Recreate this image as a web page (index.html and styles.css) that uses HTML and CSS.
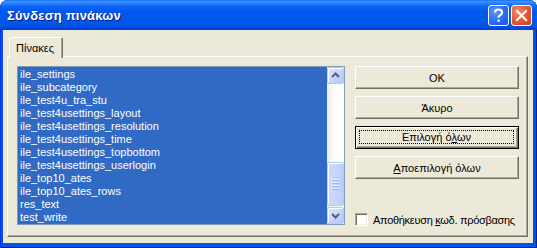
FILE: index.html
```html
<!DOCTYPE html>
<html>
<head>
<meta charset="utf-8">
<link rel="stylesheet" href="styles.css">
</head>
<body>
<div class="window">
  <div class="titlebar">
    <span class="title">Σύνδεση πινάκων</span>
    <div class="tbtns">
      <div class="tbtn help"><svg width="21" height="21" viewBox="0 0 21 21"><path d="M7 7.5 Q7 4.5 10.5 4.5 Q14 4.5 14 7.5 Q14 9.5 11.8 10.4 Q10.5 11 10.5 12.8" fill="none" stroke="#fff" stroke-width="2.2"/><rect x="9.4" y="14.5" width="2.3" height="2.3" fill="#fff"/></svg></div>
      <div class="tbtn close"><svg width="21" height="21" viewBox="0 0 21 21"><path d="M6 6 L15 15 M15 6 L6 15" stroke="#fff" stroke-width="2.2" stroke-linecap="square"/></svg></div>
    </div>
  </div>
  <div class="body">
    <div class="tabs"><div class="tab">Πίνακες</div></div>
    <div class="panel">
      <div class="list">
        <div class="items">
          <div class="item">ile_settings</div>
          <div class="item">ile_subcategory</div>
          <div class="item">ile_test4u_tra_stu</div>
          <div class="item">ile_test4usettings_layout</div>
          <div class="item">ile_test4usettings_resolution</div>
          <div class="item">ile_test4usettings_time</div>
          <div class="item">ile_test4usettings_topbottom</div>
          <div class="item">ile_test4usettings_userlogin</div>
          <div class="item">ile_top10_ates</div>
          <div class="item">ile_top10_ates_rows</div>
          <div class="item">res_text</div>
          <div class="item">test_write</div>
        </div>
        <div class="scroll">
          <div class="sbtn"><svg width="15" height="15" viewBox="0 0 15 15"><path d="M4 9 L7.5 5.5 L11 9" fill="none" stroke="#4D6185" stroke-width="2"/></svg></div>
          <div class="track">
            <div class="thumb"><span class="grip"></span><span class="grip"></span><span class="grip"></span><span class="grip"></span></div>
          </div>
          <div class="sbtn"><svg width="15" height="15" viewBox="0 0 15 15"><path d="M4 6 L7.5 9.5 L11 6" fill="none" stroke="#4D6185" stroke-width="2"/></svg></div>
        </div>
      </div>
      <div class="side">
        <div class="btn">OK</div>
        <div class="btn">Άκυρο</div>
        <div class="btn default"><span class="focus">Επιλογή ό<u>λ</u>ων</span></div>
        <div class="btn"><span><u>Α</u>ποεπιλογή όλων</span></div>
        <div class="spacer"></div>
        <label class="check"><span class="box"></span><span class="lbl">Αποθήκευση <u>κ</u>ωδ. πρόσβασης</span></label>
      </div>
    </div>
  </div>
</div>
</body>
</html>
```
FILE: styles.css
```css
html, body {
  margin: 0;
  padding: 0;
  width: 537px;
  height: 248px;
  overflow: hidden;
  background: #ffffff;
  font-family: "Liberation Sans", Arial, sans-serif;
  font-size: 11px;
}
.window {
  width: 537px;
  height: 248px;
  box-sizing: border-box;
  display: flex;
  flex-direction: column;
  background: #0055E5;
  border-radius: 8px 8px 0 0;
  box-shadow: inset 1px 0 0 #0831D9, inset -1px 0 0 #001EA0, inset 0 -1px 0 #001EA0;
}
.titlebar {
  height: 30px;
  flex: none;
  display: flex;
  align-items: center;
  justify-content: space-between;
  padding: 0 5px 0 7px;
  border-radius: 8px 8px 0 0;
  background: linear-gradient(to bottom, #0A5FEF 0, #3D95FF 1px, #2A86FF 3px, #0F66F4 6px, #0058EE 11px, #0057EB 22px, #0052E2 26px, #003DD7 30px);
}
.title {
  color: #ffffff;
  font-family: "Liberation Sans", Arial, sans-serif;
  font-weight: bold;
  font-size: 13px;
  letter-spacing: 0.2px;
  text-shadow: 1px 1px 0 #0A1883;
  margin-top: 1px;
}
.tbtns {
  display: flex;
  gap: 2px;
}
.tbtn {
  width: 21px;
  height: 21px;
  box-sizing: border-box;
  border: 1px solid #ffffff;
  border-radius: 3px;
  display: flex;
  align-items: center;
  justify-content: center;
  overflow: hidden;
}
.tbtn svg { flex: none; margin: -1px; }
.help {
  background: radial-gradient(circle at 30% 30%, #5C95FF 0, #2D6EF4 50%, #1A55E0 100%);
}
.close {
  background: radial-gradient(circle at 30% 30%, #F08B69 0, #E25A35 50%, #C8401C 100%);
}
.body {
  flex: 1;
  margin: 0 4px 5px 3px;
  background: #ECE9D8;
  display: flex;
  flex-direction: column;
  padding: 7px 5px 6px 4px;
}
.tabs {
  display: flex;
  padding-left: 2px;
  height: 19px;
}
.tab {
  box-sizing: border-box;
  padding: 4px 7px 0 6px;
  border-top: 1px solid #ffffff;
  border-left: 1px solid #ffffff;
  border-right: 1px solid #716F64;
  box-shadow: inset -1px 0 0 #ACA899;
  border-radius: 2px 2px 0 0;
  background: #ECE9D8;
  color: #000;
  position: relative;
  z-index: 1;
  height: 21px;
  width: 54px;
}
.panel {
  flex: 1;
  display: flex;
  gap: 10px;
  padding: 9px 7px 9px 9px;
  border-top: 1px solid #ffffff;
  border-left: 1px solid #ffffff;
  border-right: 1px solid #716F64;
  border-bottom: 1px solid #716F64;
  box-shadow: inset -1px -1px 0 #ACA899;
}
.list {
  width: 328px;
  height: 159px;
  box-sizing: border-box;
  border: 1px solid #7F9DB9;
  display: flex;
  background: #ffffff;
}
.items {
  flex: 1;
  background: #316AC5;
  color: #ffffff;
  padding-top: 1px;
}
.item {
  height: 13px;
  line-height: 13px;
  padding-left: 2px;
  white-space: nowrap;
}
.scroll {
  width: 17px;
  display: flex;
  flex-direction: column;
  background: linear-gradient(to right, #EEEDE5 0, #F6F5F0 3px, #FDFDFA 8px, #FEFEFB 100%);
}
.sbtn {
  height: 17px;
  box-sizing: border-box;
  border: 1px solid #B5C8F3;
  border-radius: 2px;
  background: linear-gradient(135deg, #E1EAFE 0, #C5D6FC 50%, #B4C9F8 100%);
  box-shadow: inset 1px 1px 0 #ffffff;
  display: flex;
  align-items: center;
  justify-content: center;
}
.track {
  flex: 1;
  display: flex;
  flex-direction: column;
  justify-content: flex-end;
  padding-bottom: 1px;
}
.thumb {
  height: 44px;
  box-sizing: border-box;
  border: 1px solid #B5C8F3;
  border-radius: 2px;
  background: linear-gradient(to right, #CAD9FC 0, #C7D7FC 50%, #BACEFA 100%);
  box-shadow: inset 1px 1px 0 #ffffff;
  display: flex;
  flex-direction: column;
  align-items: center;
  justify-content: center;
  gap: 1px;
}
.grip {
  width: 6px;
  height: 1px;
  background: #EEF4FE;
  border-bottom: 1px solid #8CB0F8;
}
.side {
  width: 164px;
  display: flex;
  flex-direction: column;
  gap: 7px;
}
.btn {
  height: 23px;
  flex: none;
  box-sizing: border-box;
  border-top: 1px solid #ffffff;
  border-left: 1px solid #ffffff;
  border-right: 1px solid #716F64;
  border-bottom: 1px solid #716F64;
  box-shadow: inset -1px -1px 0 #ACA899;
  display: flex;
  align-items: center;
  justify-content: center;
  color: #000;
  background: #ECE9D8;
}
.btn.default {
  border: 1px solid #000000;
  box-shadow: inset 1px 1px 0 #ffffff, inset -1px -1px 0 #716F64, inset -2px -2px 0 #ACA899;
  padding: 3px 4px 4px 3px;
}
.focus {
  flex: 1;
  align-self: stretch;
  display: flex;
  align-items: center;
  justify-content: center;
  outline: 1px dotted #000;
  outline-offset: -1px;
}
.spacer { flex: 1; }
.check {
  display: flex;
  align-items: center;
  gap: 5px;
  height: 13px;
  flex: none;
  margin-bottom: 1px;
  color: #000;
  white-space: nowrap;
}
.lbl {
  font-size: 11px;
  letter-spacing: -0.3px;
}
.box {
  width: 13px;
  height: 13px;
  flex: none;
  box-sizing: border-box;
  background: #ffffff;
  border-top: 1px solid #ACA899;
  border-left: 1px solid #ACA899;
  border-right: 1px solid #ffffff;
  border-bottom: 1px solid #ffffff;
  box-shadow: inset 1px 1px 0 #716F64, inset -1px -1px 0 #F1EFE2;
}
```
